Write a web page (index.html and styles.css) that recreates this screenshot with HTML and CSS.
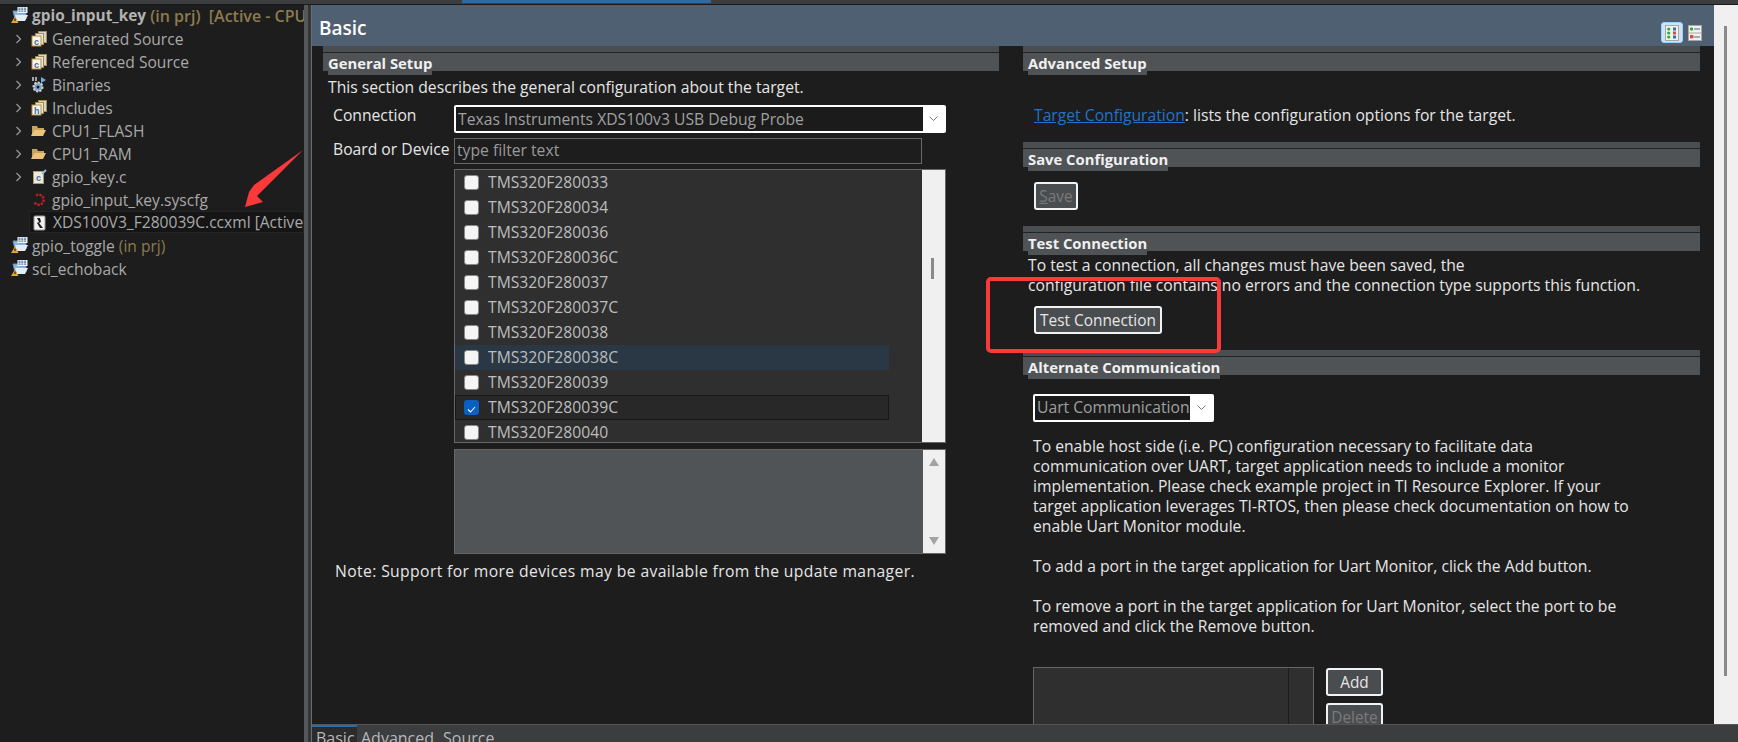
FILE: index.html
```html
<!DOCTYPE html>
<html lang="en">
<head>
<meta charset="UTF-8">
<title>XDS100V3_F280039C.ccxml</title>
<link rel="stylesheet" href="styles.css">
</head>
<body>
<svg class="defs" width="0" height="0">
    <symbol id="i-project" viewBox="0 0 17 17">
        <path d="M2 4h5l1 2h7v6H4z" fill="#8fb8de" stroke="#6d8fb0" stroke-width="1"/>
        <path d="M4 8h13l-3 6H6z" fill="#e3edf8"/>
        <rect x="6.5" y="0" width="10" height="6" fill="#f6f6f6"/>
        <path d="M7.5 1.2h8M7.5 2.7h8M7.5 4.2h8" stroke="#2c5fa8" stroke-width="0.9" stroke-dasharray="2 0.8"/>
        <path d="M4 9.5l3.5 6.5H0z" fill="#e6a72f"/>
        <rect x="3.4" y="11.5" width="1.2" height="2.6" fill="#222"/>
    </symbol>
    <symbol id="i-source" viewBox="0 0 16 17">
        <rect x="7.5" y="1.5" width="8" height="11" fill="#d9d4c4" stroke="#a08a58"/>
        <rect x="4.5" y="3.5" width="8" height="11" fill="#e8e4d8" stroke="#a08a58"/>
        <rect x="1" y="6" width="9" height="10" fill="#f4f4f0" stroke="#c0913a"/>
        <text x="3" y="14.5" class="icon-letter">c</text>
    </symbol>
    <symbol id="i-include" viewBox="0 0 16 17">
        <rect x="7.5" y="1.5" width="8" height="11" fill="#d9d4c4" stroke="#a08a58"/>
        <rect x="4.5" y="3.5" width="8" height="11" fill="#e8e4d8" stroke="#a08a58"/>
        <rect x="1" y="6" width="9" height="10" fill="#f4f4f0" stroke="#c0913a"/>
        <text x="3" y="14.5" class="icon-letter">h</text>
    </symbol>
    <symbol id="i-folder" viewBox="0 0 15 12">
        <path d="M1 1h5l1 2h6v2H3L1 10z" fill="#c9a25c"/>
        <path d="M3 5h12l-3 6H0z" fill="#eec47c"/>
    </symbol>
    <symbol id="i-up" viewBox="0 0 10 8"><path d="M5 0l5 8H0z" fill="#a3a3a3"/></symbol>
    <symbol id="i-chev" viewBox="0 0 8 10"><path d="M1.5 1l4 4-4 4" fill="none" stroke="#9a9a9a" stroke-width="1.2"/></symbol>
</svg>

<div class="top-strip"><span class="top-active"></span></div>

<div class="workspace">
    <aside class="explorer">
        <div class="tree-row level-0">
            <svg class="chev hidden"><use href="#i-chev"/></svg>
            <svg class="ico-project"><use href="#i-project"/></svg>
            <b class="name-open">gpio_input_key</b><span class="decor decor-strong">&nbsp;(in prj)&nbsp; [Active - CPU</span>
        </div>
        <div class="tree-row level-1">
            <svg class="chev"><use href="#i-chev"/></svg>
            <svg class="ico"><use href="#i-source"/></svg>
            <span>Generated Source</span>
        </div>
        <div class="tree-row level-1">
            <svg class="chev"><use href="#i-chev"/></svg>
            <svg class="ico"><use href="#i-source"/></svg>
            <span>Referenced Source</span>
        </div>
        <div class="tree-row level-1">
            <svg class="chev"><use href="#i-chev"/></svg>
            <svg class="ico" viewBox="0 0 16 17">
                <circle cx="7" cy="11" r="4.5" fill="#7fa6c9" stroke="#d8d8d8" stroke-width="2" stroke-dasharray="2 1.4"/>
                <circle cx="7" cy="11" r="1.5" fill="#1d1d1d"/>
                <path d="M10 1l5 3-5 3z" fill="#79a9d6"/>
                <path d="M2 1v4M5 1v4" stroke="#c8c8c8" stroke-width="1.6"/>
            </svg>
            <span>Binaries</span>
        </div>
        <div class="tree-row level-1">
            <svg class="chev"><use href="#i-chev"/></svg>
            <svg class="ico"><use href="#i-include"/></svg>
            <span>Includes</span>
        </div>
        <div class="tree-row level-1">
            <svg class="chev"><use href="#i-chev"/></svg>
            <svg class="ico-folder"><use href="#i-folder"/></svg>
            <span>CPU1_FLASH</span>
        </div>
        <div class="tree-row level-1">
            <svg class="chev"><use href="#i-chev"/></svg>
            <svg class="ico-folder"><use href="#i-folder"/></svg>
            <span>CPU1_RAM</span>
        </div>
        <div class="tree-row level-1">
            <svg class="chev"><use href="#i-chev"/></svg>
            <svg class="ico" viewBox="0 0 16 17">
                <rect x="2.5" y="3.5" width="10" height="12" fill="#efeadc" stroke="#a89a70"/>
                <text x="5" y="13" class="icon-letter">c</text>
                <path d="M11 6l4-4" stroke="#8fb6dc" stroke-width="2"/>
            </svg>
            <span>gpio_key.c</span>
        </div>
        <div class="tree-row level-1">
            <svg class="chev hidden"><use href="#i-chev"/></svg>
            <svg class="ico" viewBox="0 0 16 17">
                <path d="M5 4.5a5 5 0 1 1-1.5 7" fill="none" stroke="#b3202a" stroke-width="2.6" stroke-dasharray="2.4 1"/>
            </svg>
            <span>gpio_input_key.syscfg</span>
        </div>
        <div class="tree-row level-1 is-selected">
            <svg class="chev hidden"><use href="#i-chev"/></svg>
            <svg class="ico" viewBox="0 0 16 17">
                <rect x="2" y="2" width="11" height="14" rx="1" fill="#f2f2f2" stroke="#9a9a9a"/>
                <path d="M5 4h3l1 4-2 1 4 5H8L5 9l2-1z" fill="#1b1b1b"/>
            </svg>
            <span>XDS100V3_F280039C.ccxml</span><span>&nbsp;[Active</span>
        </div>
        <div class="tree-row level-0">
            <svg class="chev"><use href="#i-chev"/></svg>
            <svg class="ico-project"><use href="#i-project"/></svg>
            <span>gpio_toggle</span><span class="decor">&nbsp;(in prj)</span>
        </div>
        <div class="tree-row level-0">
            <svg class="chev"><use href="#i-chev"/></svg>
            <svg class="ico-project"><use href="#i-project"/></svg>
            <span>sci_echoback</span>
        </div>
    </aside>

    <div class="splitter"></div>

    <main class="editor">
        <div class="editor-scroll">
            <div class="editor-page">
                <header class="page-head">
                    <h1>Basic</h1>
                    <div class="head-tools">
                        <span class="tool is-on">
                            <svg width="14" height="16" viewBox="0 0 14 16">
                                <rect x="0.5" y="0.5" width="13" height="15" fill="#f3f1e8" stroke="#a8a8a0"/>
                                <circle cx="3.7" cy="4" r="1.6" fill="#2fa84a"/>
                                <circle cx="3.7" cy="8" r="1.6" fill="#2fa84a"/>
                                <circle cx="3.7" cy="12" r="1.6" fill="#2fa84a"/>
                                <rect x="8" y="2.5" width="3" height="3" fill="#3a6cc0"/>
                                <rect x="8" y="6.5" width="3" height="3" fill="#d05050"/>
                                <rect x="8" y="10.5" width="3" height="3" fill="#3a6cc0"/>
                            </svg>
                        </span>
                        <span class="tool">
                            <svg width="14" height="16" viewBox="0 0 14 16">
                                <rect x="0.5" y="0.5" width="13" height="15" fill="#f3f1e8" stroke="#a8a8a0"/>
                                <path d="M1 8h12" stroke="#a8a8a0"/>
                                <circle cx="3.5" cy="4" r="1.7" fill="#2fa84a"/>
                                <path d="M6 4h6" stroke="#7d92c8" stroke-width="1.5"/>
                                <rect x="2" y="10" width="3.4" height="3.4" fill="#d05050"/>
                                <path d="M6 12h6" stroke="#7d92c8" stroke-width="1.5"/>
                            </svg>
                        </span>
                    </div>
                </header>

                <div class="form-columns">
                    <section class="col-left">
                        <div class="sec-bar"><h2>General Setup</h2></div>
                        <p class="sec-intro">This section describes the general configuration about the target.</p>

                        <div class="field-grid">
                            <label class="field-label label-conn">Connection</label>
                            <div class="combo combo-wide">
                                <span class="combo-value">Texas Instruments XDS100v3 USB Debug Probe</span>
                                <span class="combo-arrow"><svg width="9" height="6" viewBox="0 0 9 6"><path d="M0.5 0.5l4 4 4-4" fill="none" stroke="#777"/></svg></span>
                            </div>
                            <label class="field-label label-board">Board or Device</label>
                            <div class="filter-box">type filter text</div>
                            <div class="device-list">
                                <ul class="devices">
                                    <li class="device"><i class="check"></i>TMS320F280033</li>
                                    <li class="device"><i class="check"></i>TMS320F280034</li>
                                    <li class="device"><i class="check"></i>TMS320F280036</li>
                                    <li class="device"><i class="check"></i>TMS320F280036C</li>
                                    <li class="device"><i class="check"></i>TMS320F280037</li>
                                    <li class="device"><i class="check"></i>TMS320F280037C</li>
                                    <li class="device"><i class="check"></i>TMS320F280038</li>
                                    <li class="device is-hover"><i class="check"></i>TMS320F280038C</li>
                                    <li class="device"><i class="check"></i>TMS320F280039</li>
                                    <li class="device is-focus"><i class="check is-checked"><svg width="15" height="15" viewBox="0 0 15 15"><path d="M4 7.5l2.5 2.5 4.5-5" fill="none" stroke="#fff" stroke-width="1.1"/></svg></i>TMS320F280039C</li>
                                    <li class="device"><i class="check"></i>TMS320F280040</li>
                                </ul>
                                <div class="list-scroll"><span class="list-thumb"></span></div>
                            </div>
                            <div class="detail-box">
                                <div class="detail-fill"></div>
                                <div class="detail-scroll">
                                    <svg width="10" height="8"><use href="#i-up"/></svg>
                                    <svg class="flip" width="10" height="8"><use href="#i-up"/></svg>
                                </div>
                            </div>
                        </div>
                        <p class="note">Note: Support for more devices may be available from the update manager.</p>
                    </section>

                    <section class="col-right">
                        <div class="sec-bar"><h2>Advanced Setup</h2></div>
                        <p class="target-line"><a class="link" href="#">Target Configuration</a>: lists the configuration options for the target.</p>

                        <div class="sec-bar sec-save"><h2>Save Configuration</h2></div>
                        <button class="btn btn-save is-off"><u>S</u>ave</button>

                        <div class="sec-bar sec-test"><h2>Test Connection</h2></div>
                        <p class="test-text">To test a connection, all changes must have been saved, the<br>configuration file contains no errors and the connection type supports this function.</p>
                        <button class="btn btn-test">Test Connection</button>

                        <div class="sec-bar sec-alt"><h2>Alternate Communication</h2></div>
                        <div class="combo combo-uart">
                            <span class="combo-value">Uart Communication</span>
                            <span class="combo-arrow"><svg width="9" height="6" viewBox="0 0 9 6"><path d="M0.5 0.5l4 4 4-4" fill="none" stroke="#777"/></svg></span>
                        </div>
                        <div class="alt-text">
                            <p>To enable host side (i.e. PC) configuration necessary to facilitate data<br>communication over UART, target application needs to include a monitor<br>implementation. Please check example project in TI Resource Explorer. If your<br>target application leverages TI-RTOS, then please check documentation on how to<br>enable Uart Monitor module.</p>
                            <p>To add a port in the target application for Uart Monitor, click the Add button.</p>
                            <p>To remove a port in the target application for Uart Monitor, select the port to be<br>removed and click the Remove button.</p>
                        </div>
                        <div class="port-row">
                            <div class="port-list"><span class="port-col"></span></div>
                            <div class="port-btns">
                                <button class="btn btn-add">Add</button>
                                <button class="btn btn-add is-off">Delete</button>
                            </div>
                        </div>
                    </section>
                </div>
            </div>
            <div class="page-scroll"><span class="page-thumb"></span></div>
        </div>

        <nav class="tabs">
            <span class="tab is-active">Basic</span>
            <span class="tab">Advanced</span>
            <span class="tab">Source</span>
        </nav>
    </main>
</div>

<!-- screenshot annotations -->
<svg class="mark-arrow" width="62" height="60" viewBox="0 0 62 60">
    <path d="M59 1L10 36 5 43 1 58 19 53 13 47z" fill="#f93a3a"/>
</svg>
<div class="mark-box"></div>
</body>
</html>
```

FILE: styles.css
```css
* {
    box-sizing: border-box;
}
html, body {
    height: 100%;
    margin: 0;
}
body {
    width: 1738px;
    height: 742px;
    overflow: hidden;
    position: relative;
    display: flex;
    flex-direction: column;
    background: #1d1d1d;
    color: #e6e6e6;
    font-family: "Open Sans", "Noto Sans", sans-serif;
    font-size: 15.7px;
}
p, ul, h1, h2 {
    margin: 0;
    padding: 0;
}
.defs {
    position: absolute;
}
.icon-letter {
    font-family: "Liberation Sans", sans-serif;
    font-size: 9px;
    font-weight: bold;
    fill: #3b6ea5;
}

.top-strip {
    height: 5px;
    flex: none;
    background: #3c3d3e;
    border-bottom: 1px solid #1a1a1a;
    position: relative;
}
.top-active {
    position: absolute;
    left: 462px;
    top: 0;
    width: 249px;
    height: 3px;
    background: #2f6ba0;
}

.workspace {
    flex: 1;
    min-height: 0;
    display: flex;
}

/* project explorer */
.explorer {
    width: 304px;
    flex: none;
    margin-top: -1px;
    overflow: hidden;
    background: #1d1d1d;
}
.tree-row {
    height: 23px;
    display: flex;
    align-items: center;
    white-space: nowrap;
    color: #a9a9a9;
    font-size: 15.6px;
}
.level-0 .chev {
    margin-left: -7px;
    margin-right: 10px;
}
.level-1 .chev {
    margin-left: 15px;
    margin-right: 8px;
}
.chev {
    width: 8px;
    height: 10px;
    flex: none;
}
.hidden {
    visibility: hidden;
}
.ico-project {
    width: 17px;
    height: 17px;
    margin-right: 4px;
    flex: none;
}
.ico {
    width: 16px;
    height: 17px;
    margin-right: 5px;
    flex: none;
}
.ico-folder {
    width: 15px;
    height: 12px;
    margin-right: 6px;
    flex: none;
}
.name-open {
    font-weight: 700;
    font-size: 15.4px;
    color: #b2b2b2;
}
.decor {
    color: #8b7b50;
}
.decor-strong {
    font-weight: 600;
    font-size: 16px;
}
.is-selected {
    position: relative;
    background: #151515;
    box-shadow: inset 0 0 0 1px #242424;
    margin-left: 29px;
    height: 22px;
    margin-bottom: 1px;
}
.is-selected .chev {
    width: 0;
    margin: 0 3px 0 0;
}

.splitter {
    width: 7px;
    flex: none;
    background: linear-gradient(90deg, #55585a 0 4px, #333536 4px);
}

/* editor */
.editor {
    flex: 1;
    min-width: 0;
    display: flex;
    flex-direction: column;
    border-left: 1px solid #6a6d70;
}
.editor-scroll {
    flex: 1;
    min-height: 0;
    display: flex;
    overflow: hidden;
}
.editor-page {
    flex: 1;
    min-width: 0;
    overflow: hidden;
}
.page-scroll {
    width: 24px;
    flex: none;
    background: #f0f0f0;
    padding: 21px 0 0 10px;
}
.page-thumb {
    display: block;
    width: 3px;
    height: 650px;
    background: #8a8a8a;
}
.page-head {
    height: 41px;
    display: flex;
    justify-content: space-between;
    background: #4f6072;
    padding: 0 12px 0 7px;
}
.page-head h1 {
    font-size: 19px;
    font-weight: 600;
    line-height: 46px;
    color: #fff;
}
.head-tools {
    display: flex;
    align-items: flex-start;
    gap: 5px;
    padding-top: 17px;
}
.tool {
    width: 22px;
    height: 21px;
    display: flex;
    align-items: center;
    justify-content: center;
}
.tool.is-on {
    background: #cce4f7;
    border: 1px solid #99d1ff;
    border-radius: 3px;
}
.tool + .tool {
    width: 14px;
}

.form-columns {
    display: flex;
    padding-left: 11px;
}
.col-left {
    width: 676px;
    flex: none;
}
.col-right {
    width: 677px;
    flex: none;
    margin-left: 24px;
}

.sec-bar {
    height: 25px;
    border-top: 6px solid #4b4e50;
    background: #4f5356;
    box-shadow: inset 0 1px 0 #222;
    padding-left: 5px;
}
.sec-bar h2 {
    font-size: 14.8px;
    font-weight: 700;
    line-height: 19px;
    color: #f0f0f0;
    background: #4f5356;
    display: inline-block;
    height: 21px;
    position: relative;
}
.sec-save {
    margin-top: 17px;
}
.sec-test {
    margin-top: 16px;
}
.sec-alt {
    margin-top: 16px;
}

.sec-intro {
    margin: 6px 0 0 5px;
    line-height: 20px;
    white-space: nowrap;
}
.field-grid {
    display: grid;
    grid-template-columns: 131px 492px;
    margin-top: 8px;
}
.field-label {
    padding-left: 10px;
    line-height: 20px;
    white-space: nowrap;
}
.label-board {
    grid-column: 1;
    grid-row: 2;
    margin-top: 5px;
    padding-top: 1px;
}
.combo {
    display: flex;
    background: #fff;
    border: 2px solid #fff;
    border-radius: 2px;
}
.combo-value {
    background: #1b1b1b;
    color: #a0a0a0;
    line-height: 24px;
    padding-left: 2px;
    white-space: nowrap;
}
.combo-arrow {
    flex: none;
    display: flex;
    align-items: center;
    justify-content: center;
}
.combo-wide {
    height: 28px;
}
.combo-wide .combo-value {
    flex: 1;
}
.combo-wide .combo-arrow {
    width: 21px;
}
.filter-box {
    grid-column: 2;
    grid-row: 2;
    width: 468px;
    height: 26px;
    margin-top: 5px;
    border: 1px solid #686868;
    color: #9a9a9a;
    line-height: 23px;
    padding-left: 2px;
}
.device-list {
    grid-column: 2;
    height: 274px;
    margin-top: 5px;
    display: flex;
    background: #2f2f2f;
    border: 1px solid #666;
    overflow: hidden;
}
.devices {
    flex: 1;
    list-style: none;
}
.device {
    height: 25px;
    width: 434px;
    display: flex;
    align-items: center;
    color: #bdbdbd;
    padding: 0 0 1px 9px;
    white-space: nowrap;
}
.is-hover {
    background: #2a3744;
}
.is-focus {
    background: #282828;
    box-shadow: inset 0 0 0 1px #171717;
}
.check {
    width: 15px;
    height: 15px;
    flex: none;
    margin-right: 9px;
    background: #f5f5f5;
    border: 1px solid #888;
    border-radius: 3px;
}
.check.is-checked {
    background: #0a5fc0;
    border: 0;
    display: block;
}
.list-scroll {
    width: 23px;
    flex: none;
    background: #f0f0f0;
    padding: 88px 0 0 9px;
}
.list-thumb {
    display: block;
    width: 3px;
    height: 21px;
    background: #8a8a8a;
}
.detail-box {
    grid-column: 2;
    height: 105px;
    margin-top: 6px;
    display: flex;
    background: #505456;
    border: 1px solid #666;
}
.detail-fill {
    flex: 1;
}
.detail-scroll {
    width: 22px;
    flex: none;
    background: #f0f0f0;
    display: flex;
    flex-direction: column;
    align-items: center;
    justify-content: space-between;
    padding: 8px 0 8px;
}
.flip {
    transform: rotate(180deg);
}
.note {
    margin: 7px 0 0 12px;
    line-height: 20px;
    letter-spacing: 0.38px;
    white-space: nowrap;
}

.target-line {
    margin: 34px 0 0 11px;
    line-height: 20px;
    height: 20px;
}
.link {
    color: #2472c8;
}
.btn {
    display: block;
    font-family: inherit;
    font-size: 15.4px;
    color: #e6e6e6;
    background: #4a4d50;
    border: 2px solid #f2f2f2;
    border-radius: 3px;
    padding: 0;
    height: 28px;
}
.btn.is-off {
    color: #7a7a7a;
}
.btn-save {
    width: 44px;
    margin: 15px 0 0 11px;
}
.test-text {
    margin: 4px 0 0 5px;
    line-height: 20px;
    white-space: nowrap;
}
.btn-test {
    width: 128px;
    margin: 11px 0 0 11px;
}
.combo-uart {
    width: 181px;
    height: 28px;
    margin: 19px 0 0 10px;
}
.combo-uart .combo-value {
    width: 155px;
    flex: none;
    overflow: hidden;
    line-height: 22px;
}
.combo-uart .combo-arrow {
    flex: 1;
}
.alt-text {
    margin: 14px 0 0 10px;
    line-height: 20px;
    white-space: nowrap;
}
.alt-text p {
    margin-bottom: 20px;
}
.port-row {
    display: flex;
    margin: 31px 0 0 10px;
}
.port-list {
    width: 281px;
    height: 80px;
    background: #2f2f2f;
    border: 1px solid #666;
    position: relative;
}
.port-col {
    position: absolute;
    left: 254px;
    top: 0;
    bottom: 0;
    border-left: 1px solid #1d1d1d;
}
.port-btns {
    margin: 1px 0 0 12px;
}
.btn-add {
    width: 57px;
    margin-bottom: 7px;
}

.tabs {
    height: 18px;
    flex: none;
    display: flex;
    background: #3c3d3f;
    border-top: 1px solid #555;
    color: #b8b8b8;
    font-size: 16px;
    overflow: hidden;
}
.tab {
    padding: 3px 4px 0;
    line-height: 20px;
}
.tab + .tab {
    margin-right: 1px;
}
.tab.is-active {
    width: 45px;
    background: #2b2b2b;
    border-top: 3px solid #2f6ba0;
    margin-top: -1px;
    padding-top: 1px;
}

/* annotations drawn on top of the screenshot */
.mark-arrow {
    position: absolute;
    left: 244px;
    top: 149px;
}
.mark-box {
    position: absolute;
    left: 986px;
    top: 277px;
    width: 235px;
    height: 76px;
    border: 4px solid #f93a3a;
    border-radius: 5px;
}
```
